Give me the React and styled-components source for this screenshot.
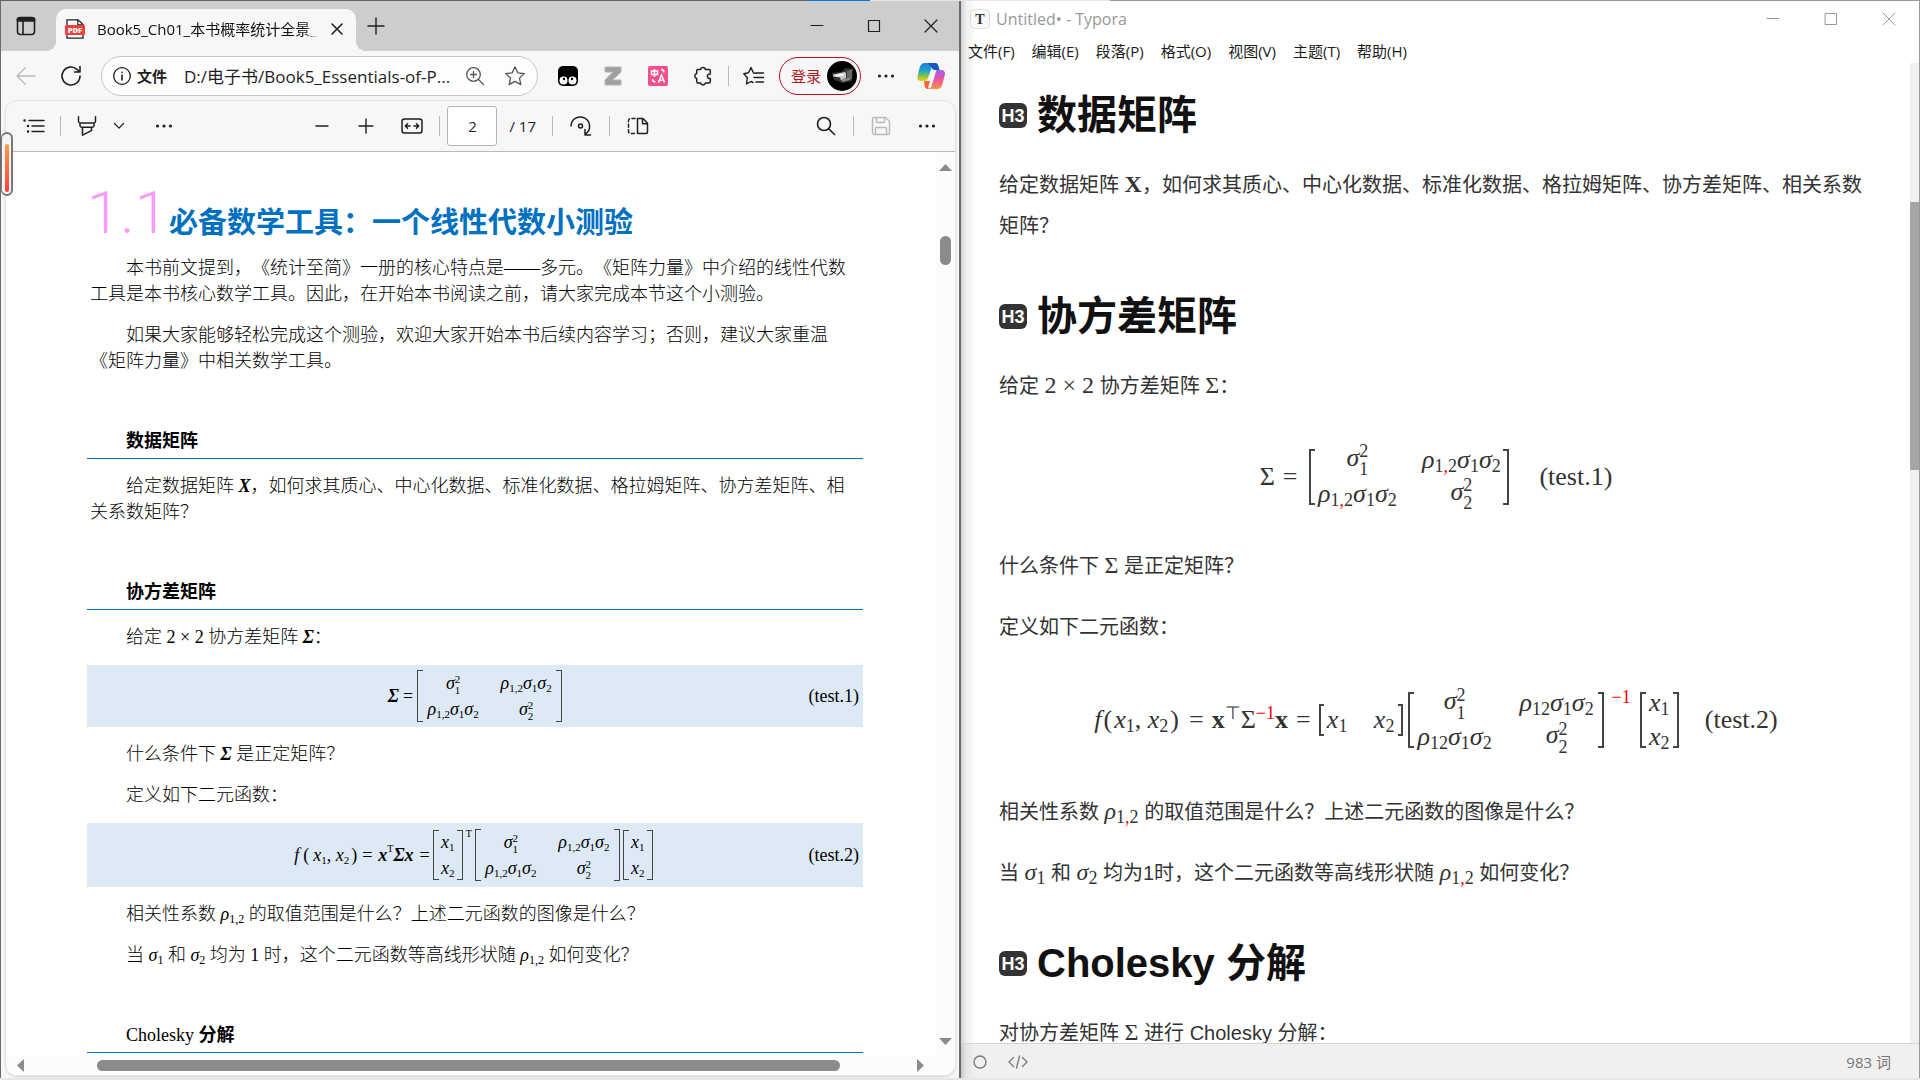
import styled, { createGlobalStyle } from "styled-components";

const GlobalStyle = createGlobalStyle`
  * {
    box-sizing: border-box;
  }
  body {
    margin: 0;
    overflow: hidden;
    background: #e6e6e6;
    font-family: "Open Sans", "Noto Sans CJK SC", sans-serif;
    text-spacing-trim: space-all;
  }
  button {
    font: inherit;
    color: inherit;
    background: none;
    border: none;
    padding: 0;
  }
  h2, h3, p {
    margin: 0;
  }
  b {
    font-weight: 700;
  }
`;

const Desktop = styled.div`
  height: 100vh;
  padding-bottom: 2px;
  display: flex;
  flex-direction: column;
`;

const TopEdge = styled.div`
  height: 1px;
  background: linear-gradient(
    90deg,
    #666466 42.1%, #0078d4 42.1%, #0078d4 45.3%,
    #e5e5e5 45.3%, #e5e5e5 57.8%, #999999 57.8%
  );
`;

const Windows = styled.div`
  flex: 1;
  min-height: 0;
  display: grid;
  grid-template-columns: 961fr 959fr;
`;

/* ---------- navegador ---------- */

const Browser = styled.section`
  position: relative;
  min-width: 0;
  min-height: 0;
  display: flex;
  flex-direction: column;
  background: #f7f7f7;
  border-left: 1px solid #6b6b6b;
  border-right: 2px solid #6b6b6b;
  color: #1f1f1f;
`;

const TabBar = styled.div`
  height: 50px;
  display: flex;
  align-items: center;
  background: #cdcdcd;
  padding-left: 5px;
`;

const IconButton = styled.button`
  width: ${(p) => p.$w || 40}px;
  height: 40px;
  flex: none;
  display: flex;
  align-items: center;
  justify-content: center;
  color: ${(p) => p.$color || "#1f1f1f"};
`;

const Tab = styled.div`
  align-self: flex-end;
  height: 42px;
  width: 300px;
  margin-left: 10px;
  padding: 0 12px 3px 9px;
  display: flex;
  align-items: center;
  gap: 12px;
  background: #f7f7f7;
  border-radius: 10px 10px 0 0;
  position: relative;
  &::before,
  &::after {
    content: "";
    position: absolute;
    bottom: 0;
    width: 10px;
    height: 10px;
  }
  &::before {
    left: -10px;
    background: radial-gradient(circle at 0 0, #cdcdcd 10px, #f7f7f7 10px);
  }
  &::after {
    right: -10px;
    background: radial-gradient(circle at 100% 0, #cdcdcd 10px, #f7f7f7 10px);
  }
`;

const TabTitle = styled.span`
  flex: 1;
  overflow: hidden;
  white-space: nowrap;
  font-size: 15px;
  color: #111111;
  mask-image: linear-gradient(90deg, #000 94%, transparent);
`;

const WindowButtons = styled.div`
  margin-left: auto;
  display: flex;
  padding-right: ${(p) => p.$end || 0}px;
`;

const AddressRow = styled.div`
  height: 49px;
  display: flex;
  align-items: center;
  gap: 5px;
  padding: 0 8px 0 5px;
`;

const AddressBox = styled.div`
  flex: 1;
  min-width: 0;
  height: 40px;
  margin: 0 5px;
  padding: 0 2px 0 10px;
  display: flex;
  align-items: center;
  border: 1px solid #c6c6c6;
  border-radius: 20px;
  background: #fdfdfd;
`;

const FileTag = styled.label`
  font-size: 15px;
  font-weight: 600;
  margin: 0 17px 0 5px;
  white-space: nowrap;
`;

const UrlInput = styled.input`
  flex: 1;
  min-width: 0;
  border: none;
  padding: 0;
  background: none;
  outline: none;
  font: inherit;
  font-size: 17px;
  color: #1f1f1f;
  text-overflow: ellipsis;
`;

const Divider = styled.span`
  flex: none;
  width: 1px;
  height: 20px;
  margin: 0 ${(p) => p.$gap || 0}px;
  background: #b8b8b8;
`;

const LoginButton = styled.button`
  flex: none;
  width: 82px;
  height: 38px;
  padding: 0 3px 0 11px;
  display: flex;
  align-items: center;
  justify-content: space-between;
  border: 1px solid #b3131b;
  border-radius: 19px;
  color: #b3131b;
  font-size: 15px;
  white-space: nowrap;
`;

const Panel = styled.div`
  flex: 1;
  min-height: 0;
  margin: 0 3px 2px 4px;
  display: flex;
  flex-direction: column;
  overflow: hidden;
  border: 1px solid #e4e4e4;
  border-radius: 12px;
  box-shadow: 0 1px 2px rgba(0, 0, 0, 0.15);
`;

const PdfToolbar = styled.div`
  height: 51px;
  flex: none;
  display: flex;
  align-items: center;
  padding: 0 8px 0 8px;
  border-bottom: 1px solid #b9b9b9;
`;

const Spacer = styled.span`
  flex: ${(p) => p.$grow} 1 0;
`;

const Gap = styled.span`
  flex: none;
  width: ${(p) => p.$w || 6}px;
`;

const PageInput = styled.input`
  width: 50px;
  height: 40px;
  padding: 0;
  text-align: center;
  font: inherit;
  font-size: 15px;
  color: #1f1f1f;
  border: 1px solid #b5b5b5;
  border-radius: 3px;
  background: #ffffff;
`;

const PageCount = styled.label`
  padding: 0 8px 0 12px;
  font-size: 15px;
  white-space: nowrap;
`;

const Viewer = styled.div`
  flex: 1;
  min-height: 0;
  display: flex;
  background: #ffffff;
`;

const Page = styled.article`
  flex: 1;
  min-width: 0;
  min-height: 0;
  overflow: hidden;
  padding: 21px 73px 0 81px;
  color: #000000;
  font-family: "Liberation Serif", "Noto Sans CJK SC", serif;
  font-weight: 300;
  font-size: 18px;
  line-height: 26px;
`;

const ChapterTitle = styled.h2`
  height: 82px;
  display: flex;
  align-items: baseline;
  font-family: "Noto Sans CJK SC", sans-serif;
  font-size: 29px;
  line-height: 80px;
  color: #0070c0;
  white-space: nowrap;
`;

const ChapterNumber = styled.span`
  width: 82px;
  font-family: Roboto, sans-serif;
  font-weight: 300;
  font-size: 60px;
  color: #ff99ff;
`;

const Paragraph = styled.p`
  margin-bottom: 15px;
  padding: 0 3px;
  text-indent: 36px;
  white-space: nowrap;
`;

const SectionTitle = styled.h3`
  margin: 54px 0 14px;
  padding: 0 0 4px 39px;
  border-bottom: 1px solid #0070c0;
  font-size: 18px;
  line-height: 26px;
  font-weight: ${(p) => (p.$plain ? 400 : 700)};
`;

const EquationBand = styled.div`
  min-height: ${(p) => p.$h}px;
  margin: 15px 0 14px;
  padding: 0 4px;
  display: grid;
  grid-template-columns: 1fr auto 1fr;
  align-items: center;
  background: #dee9f6;
  font-weight: 400;
`;

const EquationLabel = styled.span`
  text-align: right;
  grid-column: 3;
`;

const VScroll = styled.div`
  width: 19px;
  flex: none;
  display: flex;
  flex-direction: column;
  align-items: center;
  padding: 12px 0 11px;
  background: #fcfcfc;
`;

const VThumb = styled.span`
  width: 11px;
  height: 29px;
  margin-top: 65px;
  margin-bottom: auto;
  border-radius: 6px;
  background: #8b8b8b;
`;

const HScroll = styled.div`
  height: 19px;
  flex: none;
  display: flex;
  align-items: center;
  padding: 0 31px 0 11px;
  background: #fcfcfc;
`;

const HThumb = styled.span`
  flex: 1;
  height: 11px;
  margin: 0 77px 0 73px;
  border-radius: 6px;
  background: #8b8b8b;
`;

const SideHandle = styled.div`
  position: absolute;
  left: 0;
  top: 131px;
  width: 12px;
  height: 64px;
  padding: 10px 2px 2px 2px;
  border: 2px solid #777777;
  border-left-width: 1px;
  border-radius: 6px;
  background: #f4f4f4;
  &::before {
    content: "";
    display: block;
    width: 4px;
    height: 100%;
    margin-left: 1px;
    border-radius: 2px;
    background: linear-gradient(#ff9c4a, #ff3d3d);
  }
`;

/* ---------- formulas ---------- */

const MathRow = styled.span`
  grid-column: 2;
  display: flex;
  align-items: center;
  white-space: pre;
  font-family: "Liberation Serif", serif;
  font-size: ${(p) => p.$size}px;
  line-height: 30px;
`;

const Sub = styled.span`
  font-size: ${(p) => p.$size}px;
  font-style: normal;
  line-height: 0;
  vertical-align: ${(p) => (p.$size > 14 ? -4 : -3)}px;
`;

const Sup = styled.span`
  font-size: ${(p) => p.$size}px;
  font-style: normal;
  font-weight: 400;
  line-height: 0;
  vertical-align: 9px;
  color: ${(p) => (p.$red ? "#ff0000" : "inherit")};
`;

const SupSub = styled.span`
  display: inline-flex;
  flex-direction: column;
  vertical-align: middle;
  font-size: ${(p) => p.$size}px;
  line-height: ${(p) => p.$size}px;
  font-style: normal;
`;

const Corner = styled.span`
  align-self: flex-start;
  font-size: ${(p) => p.$size}px;
  line-height: 10px;
  margin: 0 ${(p) => p.$gap}px 0 3px;
  color: ${(p) => (p.$red ? "#ff0000" : "inherit")};
`;

const Term = styled.span`
  margin: 0 ${(p) => p.$gap || 0}px;
`;

const Tag = styled.span`
  margin-left: 26px;
`;

const Red = styled.span`
  color: #ff0000;
`;

const BracketShape = styled.span`
  align-self: stretch;
  width: ${(p) => p.$w || 6}px;
  border: 1px solid #444444;
  border-width: ${(p) => p.$stroke || 1}px;
  ${(p) => (p.$right ? "border-left: none;" : "border-right: none;")}
`;

const MatrixBox = styled.span`
  display: flex;
  height: ${(p) => p.$h}px;
  margin: 0 ${(p) => p.$gap || 0}px;
`;

const Cells = styled.span`
  display: grid;
  grid-template-columns: repeat(${(p) => p.$cols}, ${(p) => p.$cellw}px);
  grid-auto-rows: ${(p) => p.$line}px;
  column-gap: ${(p) => p.$colgap}px;
  align-content: center;
  align-items: center;
  justify-items: center;
  padding: 0 2px;
  line-height: ${(p) => p.$line}px;
`;

function Matrix({ h, cols = 1, cellw, colgap = 0, stroke, line, gap, w, children }) {
  return (
    <MatrixBox $h={h} $gap={gap}>
      <BracketShape $stroke={stroke} $w={w} />
      <Cells $cols={cols} $cellw={cellw} $colgap={colgap} $line={line}>
        {children}
      </Cells>
      <BracketShape $right $stroke={stroke} $w={w} />
    </MatrixBox>
  );
}

function Var({ name, index, s }) {
  return (
    <span>
      <i>{name}</i>
      <Sub $size={s}>{index}</Sub>
    </span>
  );
}

function Square({ index, s }) {
  return (
    <span>
      <i>σ</i>
      <SupSub $size={s}>
        <span>2</span>
        <span>{index}</span>
      </SupSub>
    </span>
  );
}

function Cross({ index, s }) {
  return (
    <span>
      <Var name="ρ" index={index} s={s} />
      <Var name="σ" index="1" s={s} />
      <Var name="σ" index="2" s={s} />
    </span>
  );
}

function Covariance({ index, s, ...rest }) {
  return (
    <Matrix cols={2} {...rest}>
      <Square index="1" s={s} />
      <Cross index={index} s={s} />
      <Cross index={index} s={s} />
      <Square index="2" s={s} />
    </Matrix>
  );
}

const oneTwo = (
  <>
    1<Red>,</Red>2
  </>
);

/* ---------- editor ---------- */

const Editor = styled.section`
  min-width: 0;
  min-height: 0;
  display: flex;
  flex-direction: column;
  border-right: 1px solid #999999;
  background: linear-gradient(90deg, #d2d2d2, #efefef 5px, #ffffff 15px);
  color: #333333;
`;

const EditorTitle = styled.div`
  height: 36px;
  flex: none;
  display: flex;
  align-items: center;
  gap: 6px;
  padding-left: 9px;
  font-size: 16px;
  color: #999999;
`;

const Menu = styled.nav`
  height: 26px;
  flex: none;
  display: flex;
  align-items: center;
  gap: 17px;
  padding-left: 7px;
  font-size: 15px;
  color: #1a1a1a;
`;

const EditorBody = styled.div`
  flex: 1;
  min-height: 0;
  display: flex;
`;

const Doc = styled.article`
  flex: 1;
  min-width: 0;
  overflow: hidden;
  padding: 22px 37px 0 38px;
  font-family: "Liberation Sans", "Noto Sans CJK SC", sans-serif;
  font-size: 20px;
  line-height: 41px;
`;

const DocTitle = styled.h3`
  display: flex;
  align-items: center;
  gap: 10px;
  margin: 0 0 20px;
  font-size: 40px;
  line-height: 60px;
  color: #111111;
  p + & {
    margin-top: 39px;
  }
`;

const Badge = styled.span`
  width: 28px;
  height: 25px;
  border-radius: 6px;
  background: #333333;
  color: #ffffff;
  font-size: 18px;
  line-height: 26px;
  text-align: center;
`;

const DocText = styled.p`
  margin-bottom: 20px;
`;

const Inline = styled.span`
  font-family: "Liberation Serif", serif;
  font-size: 24px;
  line-height: 0;
`;

const DocEquation = styled.div`
  min-height: ${(p) => p.$h}px;
  margin-bottom: 20px;
  display: flex;
  justify-content: center;
  align-items: center;
`;

const EditorTrack = styled.div`
  width: 9px;
  flex: none;
  padding-top: 139px;
  background: #f0f0f0;
`;

const EditorThumb = styled.div`
  height: 268px;
  background: #a6a6a6;
`;

const StatusBar = styled.footer`
  height: 35px;
  flex: none;
  display: flex;
  align-items: center;
  gap: 21px;
  padding: 0 28px 0 12px;
  border-top: 1px solid #d4d4d4;
  background: linear-gradient(90deg, #c8c8c8, #e4e4e4 5px, #f0f0f0 15px);
  font-size: 15px;
  color: #777777;
`;

const StatusButton = styled.button`
  display: flex;
  padding-top: 2px;
`;

const WordCount = styled.button`
  margin-left: auto;
`;

/* ---------- icones ---------- */

function Icon({ w = 20, h = 20, sw = 1.4, children }) {
  return (
    <svg
      width={w}
      height={h}
      viewBox={`0 0 ${w} ${h}`}
      fill="none"
      stroke="currentColor"
      strokeWidth={sw}
      strokeLinecap="round"
      strokeLinejoin="round"
      aria-hidden="true"
    >
      {children}
    </svg>
  );
}

const Dots = () => (
  <Icon>
    <g fill="currentColor" stroke="none">
      <circle cx="3.5" cy="10" r="1.6" />
      <circle cx="10" cy="10" r="1.6" />
      <circle cx="16.5" cy="10" r="1.6" />
    </g>
  </Icon>
);

const WindowIcons = ({ size, sw = 1.2 }) => (
  <>
    <IconButton $w={size} $color="inherit" aria-label="最小化">
      <Icon w={14} h={14} sw={sw}><path d="M1 6.5h12" /></Icon>
    </IconButton>
    <IconButton $w={size} $color="inherit" aria-label="最大化">
      <Icon w={14} h={14} sw={sw}><path d="M1.500 1.500h11v11h-11z" /></Icon>
    </IconButton>
    <IconButton $w={size} $color="inherit" aria-label="关闭">
      <Icon w={14} h={14} sw={sw}><path d="M1 1l12 12M13 1L1 13" /></Icon>
    </IconButton>
  </>
);

const PdfIcon = () => (
  <svg width="20" height="20" viewBox="0 0 20 20" aria-hidden="true">
    <path d="M2 .8h11l5 4.800v13.600H2z" fill="#fff" stroke="#222" strokeWidth="1.3" />
    <path d="M12.800 .8v5h5.200" fill="none" stroke="#222" strokeWidth="1.2" />
    <rect x="0" y="6" width="20" height="10" rx="1" fill="#f43f3f" />
    <text x="10" y="13.800" textAnchor="middle" fontSize="7.500" fontWeight="800" fontFamily="Open Sans" fill="#fff">PDF</text>
  </svg>
);

const Arrow = ({ d, w = 13, h = 7 }) => (
  <svg width={w} height={h} viewBox={`0 0 ${w} ${h}`} aria-hidden="true">
    <path d={d} fill="#8b8b8b" />
  </svg>
);

const Avatar = () => (
  <svg width="30" height="30" viewBox="0 0 30 30" aria-hidden="true">
    <circle cx="15" cy="15" r="15" fill="#000" />
    <path d="M5 12l9-1 5-4 7 1-1 12-9 2-9-3z" fill="#333" />
    <path d="M6 13.500l12-2.500 1 1v5l-5 2.500-1-3-7-1z" fill="#c8c8c8" />
    <path d="M9 14l8-1.500v2l-8 1z" fill="#fff" />
    <path d="M20 10l5-2v10l-5 1z" fill="#666" />
    <path d="M15 18l8-1v2l-8 2z" fill="#8a8a8a" />
  </svg>
);

const Copilot = () => (
  <svg width="28" height="26" viewBox="0 0 28 26" aria-hidden="true">
    <defs>
      <linearGradient id="cpA" x1="0" y1="0" x2="0" y2="1">
        <stop offset="0" stopColor="#1d7be0" />
        <stop offset=".45" stopColor="#21a6c9" />
        <stop offset=".75" stopColor="#8fc93a" />
        <stop offset="1" stopColor="#f6cf1c" />
      </linearGradient>
      <linearGradient id="cpB" x1="0" y1="0" x2="0" y2="1">
        <stop offset="0" stopColor="#a45cf0" />
        <stop offset=".5" stopColor="#e8569c" />
        <stop offset="1" stopColor="#ff9340" />
      </linearGradient>
    </defs>
    <path d="M19.500 7h4.500c3 0 4.500 2 3.800 5l-2.300 9c-.8 3-2.500 5-5.500 5h-9c3 0 3.200-2 4-4.500z" fill="url(#cpB)" />
    <path d="M7 18h6l-1.500 5c-.5 2 .5 3 2 3H11c-2.500 0-3.200-1.500-3.500-3.500z" fill="#f2683c" />
    <path d="M8 0h10c-2.500 1-3 3-3.700 5.500L11.500 14c-.8 2.500-2 4-4.500 4H4C1 18 0 16 .5 13.500l2-8.500C3.300 2 5 0 8 0z" fill="url(#cpA)" />
    <path d="M11 0h7c2 0 3 1 3.500 3L22.500 7h-4c-2 0-3.300-.5-3.800-2.500z" fill="#1755c4" />
  </svg>
);

function BrowserWindow() {
  return (
    <Browser>
      <TabBar>
        <IconButton aria-label="标签页操作">
          <Icon w={20} h={20} sw={1.6}>
            <rect x="1.500" y="1.500" width="17" height="17" rx="3" />
            <path d="M2 4.200h16M2 3h16" strokeWidth="3" />
            <path d="M7 5v13" />
          </Icon>
        </IconButton>
        <Tab>
          <PdfIcon />
          <TabTitle>Book5_Ch01_本书概率统计全景__</TabTitle>
          <IconButton $w={14} aria-label="关闭标签页">
            <Icon w={12} h={12} sw={1.600}><path d="M1 1l10 10M11 1L1 11" /></Icon>
          </IconButton>
        </Tab>
        <IconButton aria-label="新建标签页">
          <Icon w={18} h={18}><path d="M9 1v16M1 9h16" /></Icon>
        </IconButton>
        <WindowButtons><WindowIcons size={57} /></WindowButtons>
      </TabBar>

      <AddressRow>
        <IconButton $color="#b9b9b9" aria-label="后退">
          <Icon><path d="M19 10H1M9 2l-8 8 8 8" /></Icon>
        </IconButton>
        <IconButton aria-label="刷新">
          <Icon w={22} h={22} sw={1.600}>
            <path d="M20 11a9 9 0 1 1-3-6.700l3 2.700M20 1.500V7h-5.500" />
          </Icon>
        </IconButton>
        <AddressBox>
          <Icon sw={1.300}>
            <circle cx="10" cy="10" r="8.300" />
            <path d="M10 9v5M10 6.200v.2" strokeWidth="1.600" />
          </Icon>
          <FileTag htmlFor="url">文件</FileTag>
          <UrlInput id="url" readOnly value="D:/电子书/Book5_Essentials-of-P..." />
          <IconButton $color="#555555" aria-label="缩放">
            <Icon sw={1.300}>
              <circle cx="8.500" cy="8.500" r="6.800" />
              <path d="M13.500 13.500L18.500 18.500M5.500 8.500h6M8.500 5.500v6" />
            </Icon>
          </IconButton>
          <IconButton $color="#555555" aria-label="收藏">
            <Icon w={22} h={22} sw={1.300}>
              <path d="M11 1.800l2.800 6 6.500.800-4.800 4.500 1.300 6.500L11 16.400l-5.800 3.200 1.300-6.500L1.700 8.600l6.500-.8z" />
            </Icon>
          </IconButton>
        </AddressBox>
        <IconButton aria-label="扩展 1">
          <svg width="20" height="20" viewBox="0 0 20 20">
            <rect width="20" height="20" rx="5" fill="#000" />
            <circle cx="5.500" cy="14.500" r="4" fill="#fff" />
            <circle cx="14.500" cy="14.500" r="4" fill="#fff" />
            <circle cx="6" cy="13" r="1.200" fill="#000" />
            <circle cx="14" cy="13" r="1.200" fill="#000" />
          </svg>
        </IconButton>
        <IconButton aria-label="Zotero">
          <svg width="18" height="20" viewBox="0 0 18 20">
            <path d="M1 1h16v5L8.500 14H17v5H1v-5l8-8H1z" fill="#9f9f9f" stroke="#b5b5b5" />
          </svg>
        </IconButton>
        <IconButton aria-label="翻译">
          <svg width="20" height="20" viewBox="0 0 20 20" fill="none" stroke="#fff" strokeWidth="1.500">
            <rect width="20" height="20" rx="2" fill="#f0508c" stroke="none" />
            <path d="M3.500 5h6v3.500h-6zM6.500 3v8M13 3.500c2 0 3 .8 3 3M4.500 13c0 2 1 3 3 3M10.500 16.500l3-7.500 3 7.500M11.500 14.200h4" />
          </svg>
        </IconButton>
        <IconButton aria-label="扩展">
          <Icon sw={1.500}>
            <path d="M5 3.500h2.500a2.600 2.600 0 0 1 5 0H16a1.300 1.300 0 0 1 1.300 1.300V8a2.300 2.300 0 1 0 0 4.400v3.300a1.300 1.300 0 0 1-1.300 1.300h-3.500a2.600 2.600 0 0 1-5 0H5a1.300 1.300 0 0 1-1.300-1.300v-3.200a2.600 2.600 0 0 1 0-5V4.800A1.300 1.300 0 0 1 5 3.500z" />
          </Icon>
        </IconButton>
        <Divider />
        <IconButton aria-label="收藏夹">
          <Icon w={22} h={20}>
            <path d="M13.500 7.200L10.500 7 8 1.500 5.500 6.800.8 7.800l3.600 4-.9 6L8 15.500M12.500 7h8M11 11.500h9.500M13 16h7.500M8 15.500l2 1" />
          </Icon>
        </IconButton>
        <LoginButton>
          登录
          <Avatar />
        </LoginButton>
        <IconButton aria-label="设置及其他"><Dots /></IconButton>
        <IconButton aria-label="Copilot"><Copilot /></IconButton>
      </AddressRow>

      <Panel>
        <PdfToolbar>
          <IconButton aria-label="目录">
            <Icon w={22} h={16}>
              <path d="M6 2.500h15M9 8h12M9 13.500h12" />
              <path d="M1.500 2.500h.1M5 8h.1M5 13.500h.1" strokeWidth="2.400" />
            </Icon>
          </IconButton>
          <Divider $gap={6} />
          <IconButton aria-label="突出显示">
            <Icon sw={1.500}>
              <path d="M1.500 .8v4.500c0 1 .6 1.700 1.600 1.700h13.800c1 0 1.600-.7 1.600-1.700V.8M3 7v2.500c0 1 .6 1.700 1.600 1.700h10.800c1 0 1.600-.7 1.600-1.700V7M5.500 11.200v8l9-4.500v-3.500" />
            </Icon>
          </IconButton>
          <IconButton $w={24} aria-label="突出显示颜色">
            <Icon w={12} h={8} sw={1.200}><path d="M1.500 1.500L6 6.200l4.500-4.700" /></Icon>
          </IconButton>
          <Gap $w={13} />
          <IconButton aria-label="更多工具"><Dots /></IconButton>
          <Spacer $grow={4} />
          <IconButton aria-label="缩小">
            <Icon w={14} h={14}><path d="M1 7h12" /></Icon>
          </IconButton>
          <Gap $w={4} />
          <IconButton aria-label="放大">
            <Icon w={16} h={16}><path d="M8 1v14M1 8h14" /></Icon>
          </IconButton>
          <Gap />
          <IconButton aria-label="适应宽度">
            <Icon w={22} h={16} sw={1.500}>
              <rect x="1" y="1" width="20" height="14" rx="2.500" />
              <path d="M9 8H4.500M6.500 5.800L4.300 8l2.200 2.200M13 8h4.500M15.500 5.800L17.700 8l-2.200 2.200" />
            </Icon>
          </IconButton>
          <Divider $gap={7} />
          <PageInput id="page" defaultValue="2" />
          <PageCount htmlFor="page">/ 17</PageCount>
          <Divider $gap={8} />
          <IconButton aria-label="旋转">
            <Icon w={22} h={22} sw={1.500}>
              <path d="M1.500 11a9.300 9.300 0 1 1 14.500 8M15.500 14.500V20H21" transform="translate(-.5 0)" />
              <circle cx="10.500" cy="11" r="2" />
            </Icon>
          </IconButton>
          <Divider $gap={8} />
          <IconButton aria-label="页面视图">
            <Icon w={22} h={18} sw={1.500}>
              <path d="M10.500 1.500h5.500l4.500 4.700v8.800a1.500 1.500 0 0 1-1.500 1.500h-8.500zM15.500 1.800V6.800h5" />
              <path d="M8 1.500H3.500A2 2 0 0 0 1.500 3.500V14.500a2 2 0 0 0 2 2H8" strokeDasharray="3 2.500" />
            </Icon>
          </IconButton>
          <Spacer $grow={5} />
          <IconButton aria-label="查找">
            <Icon sw={1.600}>
              <circle cx="8" cy="8" r="6.500" />
              <path d="M13 13l5.500 5.500" />
            </Icon>
          </IconButton>
          <Divider $gap={7} />
          <IconButton $color="#b9b9b9" aria-label="保存">
            <Icon>
              <path d="M3.500 1.500h11l4 3.800v11.200a2 2 0 0 1-2 2h-13a2 2 0 0 1-2-2v-13a2 2 0 0 1 2-2zM5.500 1.500v4a1 1 0 0 0 1 1h6a1 1 0 0 0 1-1v-4M4.500 18.500v-6a1 1 0 0 1 1-1h9a1 1 0 0 1 1 1v6" />
            </Icon>
          </IconButton>
          <Gap />
          <IconButton aria-label="更多"><Dots /></IconButton>
        </PdfToolbar>

        <Viewer>
          <Page>
            <ChapterTitle>
              <ChapterNumber>1.1</ChapterNumber>
              必备数学工具：一个线性代数小测验
            </ChapterTitle>
            <Paragraph>
              本书前文提到，《统计至简》一册的核心特点是——多元。《矩阵力量》中介绍的线性代数
              <br />
              工具是本书核心数学工具。因此，在开始本书阅读之前，请大家完成本节这个小测验。
            </Paragraph>
            <Paragraph>
              如果大家能够轻松完成这个测验，欢迎大家开始本书后续内容学习；否则，建议大家重温
              <br />
              《矩阵力量》中相关数学工具。
            </Paragraph>

            <SectionTitle>数据矩阵</SectionTitle>
            <Paragraph>
              给定数据矩阵 <b><i>X</i></b>，如何求其质心、中心化数据、标准化数据、格拉姆矩阵、协方差矩阵、相
              <br />
              关系数矩阵？
            </Paragraph>

            <SectionTitle>协方差矩阵</SectionTitle>
            <Paragraph>
              给定 2 × 2 协方差矩阵 <b><i>Σ</i></b>：
            </Paragraph>
            <EquationBand $h={62}>
              <MathRow $size={18}>
                <b><i>Σ</i></b>
                <Term $gap={4}>=</Term>
                <Covariance h={52} cellw={56} colgap={17} line={26} s={11} index="1,2" />
              </MathRow>
              <EquationLabel>(test.1)</EquationLabel>
            </EquationBand>
            <Paragraph>
              什么条件下 <b><i>Σ</i></b> 是正定矩阵？
            </Paragraph>
            <Paragraph>定义如下二元函数：</Paragraph>
            <EquationBand $h={64}>
              <MathRow $size={18}>
                <i>f</i>
                <Term $gap={4}>(</Term>
                <Var name="x" index="1" s={11} />
                <span>, </span>
                <Var name="x" index="2" s={11} />
                <Term $gap={2}>)</Term>
                <Term $gap={3}>=</Term>
                <Term $gap={3}>
                  <b><i>x</i></b>
                  <Sup $size={10}>T</Sup>
                  <b><i>Σx</i></b>
                </Term>
                <Term $gap={3}>=</Term>
                <Matrix h={50} cellw={14} line={26}>
                  <Var name="x" index="1" s={11} />
                  <Var name="x" index="2" s={11} />
                </Matrix>
                <Corner $size={10} $gap={3}>T</Corner>
                <Covariance h={52} cellw={56} colgap={17} line={26} s={11} index="1,2" />
                <Matrix h={50} cellw={14} line={26} gap={3}>
                  <Var name="x" index="1" s={11} />
                  <Var name="x" index="2" s={11} />
                </Matrix>
              </MathRow>
              <EquationLabel>(test.2)</EquationLabel>
            </EquationBand>
            <Paragraph>
              相关性系数 <Var name="ρ" index="1,2" s={12} /> 的取值范围是什么？上述二元函数的图像是什么？
            </Paragraph>
            <Paragraph>
              当 <Var name="σ" index="1" s={12} /> 和 <Var name="σ" index="2" s={12} /> 均为 1 时，这个二元函数等高线形状随{" "}
              <Var name="ρ" index="1,2" s={12} /> 如何变化？
            </Paragraph>

            <SectionTitle $plain>
              Cholesky <b>分解</b>
            </SectionTitle>
          </Page>
          <VScroll>
            <Arrow d="M0 7L6.500 0 13 7z" />
            <VThumb />
            <Arrow d="M0 0h13L6.500 7z" />
          </VScroll>
        </Viewer>
        <HScroll>
          <Arrow w={7} h={13} d="M7 0v13L0 6.500z" />
          <HThumb />
          <Arrow w={7} h={13} d="M0 0v13l7-6.500z" />
        </HScroll>
      </Panel>
      <SideHandle />
    </Browser>
  );
}

const menus = ["文件(F)", "编辑(E)", "段落(P)", "格式(O)", "视图(V)", "主题(T)", "帮助(H)"];

function EditorWindow() {
  return (
    <Editor>
      <EditorTitle>
        <svg width="20" height="20" viewBox="0 0 20 20" aria-hidden="true">
          <rect x=".5" y=".5" width="19" height="19" rx="4" fill="#fafafa" stroke="#dddddd" />
          <text x="10" y="14.500" textAnchor="middle" fontFamily="Liberation Serif" fontWeight="700" fontSize="14" fill="#333">T</text>
        </svg>
        <span>Untitled• - Typora</span>
        <WindowButtons $end={1}><WindowIcons size={58} sw={1} /></WindowButtons>
      </EditorTitle>
      <Menu>
        {menus.map((item) => (
          <button key={item}>{item}</button>
        ))}
      </Menu>
      <EditorBody>
        <Doc>
          <DocTitle><Badge>H3</Badge>数据矩阵</DocTitle>
          <DocText>
            给定数据矩阵 <Inline><b>X</b></Inline>，如何求其质心、中心化数据、标准化数据、格拉姆矩阵、协方差矩阵、相关系数矩阵？
          </DocText>

          <DocTitle><Badge>H3</Badge>协方差矩阵</DocTitle>
          <DocText>
            给定 <Inline>2 × 2</Inline> 协方差矩阵 <Inline>Σ</Inline>：
          </DocText>
          <DocEquation $h={99}>
            <MathRow $size={26}>
              Σ
              <Term $gap={8}>=</Term>
              <Covariance h={56} cellw={80} colgap={24} line={34} s={18} stroke={2} index={oneTwo} gap={4} />
              <Tag>(test.1)</Tag>
            </MathRow>
          </DocEquation>
          <DocText>
            什么条件下 <Inline>Σ</Inline> 是正定矩阵？
          </DocText>
          <DocText>定义如下二元函数：</DocText>
          <DocEquation $h={104}>
            <MathRow $size={26}>
              <i>f</i>
              <Term $gap={2}>(</Term>
              <Var name="x" index="1" s={18} />
              <span>, </span>
              <Var name="x" index="2" s={18} />
              <Term $gap={2}>)</Term>
              <Term $gap={8}>=</Term>
              <span>
                <b>x</b>
                <Sup $size={18}>⊤</Sup>
                Σ
                <Sup $size={18} $red>−1</Sup>
                <b>x</b>
              </span>
              <Term $gap={8}>=</Term>
              <Matrix h={32} cols={2} cellw={23} colgap={24} line={30} stroke={2} w={5}>
                <Var name="x" index="1" s={18} />
                <Var name="x" index="2" s={18} />
              </Matrix>
              <Covariance h={56} cellw={78} colgap={24} line={34} s={18} stroke={2} index="12" gap={5} />
              <Corner $size={18} $gap={9} $red>−1</Corner>
              <Matrix h={56} cellw={23} line={34} stroke={2}>
                <Var name="x" index="1" s={18} />
                <Var name="x" index="2" s={18} />
              </Matrix>
              <Tag>(test.2)</Tag>
            </MathRow>
          </DocEquation>
          <DocText>
            相关性系数 <Inline><Var name="ρ" index={oneTwo} s={18} /></Inline> 的取值范围是什么？上述二元函数的图像是什么？
          </DocText>
          <DocText>
            当 <Inline><Var name="σ" index="1" s={18} /></Inline> 和 <Inline><Var name="σ" index="2" s={18} /></Inline> 均为1时，这个二元函数等高线形状随{" "}
            <Inline><Var name="ρ" index={oneTwo} s={18} /></Inline> 如何变化？
          </DocText>

          <DocTitle><Badge>H3</Badge>Cholesky 分解</DocTitle>
          <DocText>
            对协方差矩阵 <Inline>Σ</Inline> 进行 Cholesky 分解：
          </DocText>
        </Doc>
        <EditorTrack><EditorThumb /></EditorTrack>
      </EditorBody>
      <StatusBar>
        <StatusButton aria-label="侧边栏">
          <Icon w={14} h={14} sw={1.300}><circle cx="7" cy="7" r="6" /></Icon>
        </StatusButton>
        <StatusButton aria-label="源代码模式">
          <Icon w={20} h={14} sw={1.300}><path d="M5.500 2.500L1 7l4.500 4.500M14.500 2.500L19 7l-4.500 4.500M11.500 1l-3 12" /></Icon>
        </StatusButton>
        <WordCount>983 词</WordCount>
      </StatusBar>
    </Editor>
  );
}

function App() {
  return (
    <>
      <GlobalStyle />
      <Desktop>
        <TopEdge />
        <Windows>
          <BrowserWindow />
          <EditorWindow />
        </Windows>
      </Desktop>
    </>
  );
}

export default App;
